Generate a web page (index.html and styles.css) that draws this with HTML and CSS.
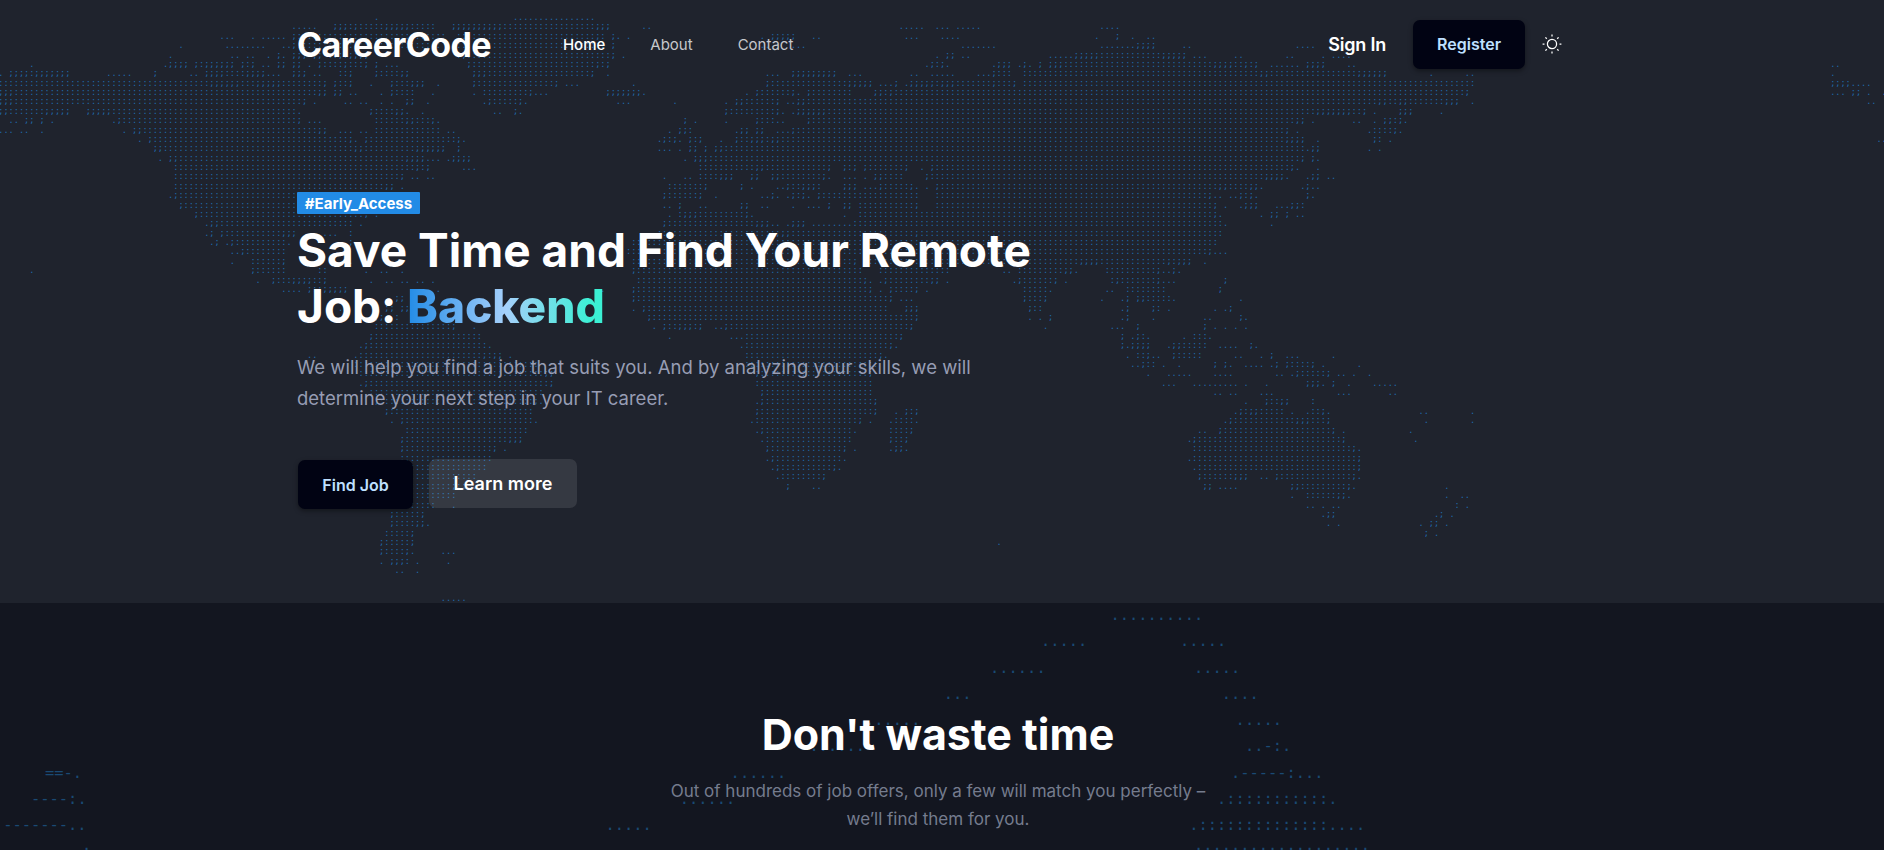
FILE: index.html
```html
<!DOCTYPE html>
<html lang="en">
<head>
<meta charset="utf-8">
<title>CareerCode</title>
<link rel="stylesheet" href="styles.css">
</head>
<body>
<section class="hero">
  <pre class="map map-world" id="world" aria-hidden="true"></pre>
  <header class="topbar">
    <a class="logo">CareerCode</a>
    <nav class="nav">
      <a class="nav-link active">Home</a>
      <a class="nav-link about">About</a>
      <a class="nav-link contact">Contact</a>
    </nav>
    <div class="actions">
      <a class="signin">Sign In</a>
      <a class="btn btn-dark">Register</a>
      <svg class="sun" viewBox="0 0 20 20" fill="none" stroke="currentColor" stroke-width="1.25">
        <circle cx="10" cy="10" r="4.6"/>
        <path d="M10 .6v1.9M10 17.5v1.9M.6 10h1.9M17.5 10h1.9M3.4 3.4l1.4 1.4M15.2 15.2l1.4 1.4M3.4 16.6l1.4-1.4M15.2 4.8l1.4-1.4"/>
      </svg>
    </div>
  </header>
  <div class="intro">
    <span class="badge">#Early_Access</span>
    <h1 class="headline"><span class="line">Save Time and Find Your Remote</span><span class="line">Job: <span class="accent">Backend</span></span></h1>
    <p class="lead"><span class="line">We will help you find a job that suits you. And by analyzing your skills, we will</span><span class="line">determine your next step in your IT career.</span></p>
    <div class="cta">
      <a class="btn btn-dark">Find Job</a>
      <a class="btn btn-light">Learn more</a>
    </div>
  </div>
</section>
<section class="waste">
  <pre class="map map-globe" id="globe" aria-hidden="true"></pre>
  <h2 class="title">Don't waste time</h2>
  <p class="sub"><span class="line">Out of hundreds of job offers, only a few will match you perfectly –</span><span class="line">we’ll find them for you.</span></p>
</section>
<script src="map.js"></script>
</body>
</html>
```
FILE: map.js
```js
// Each row lists runs as "from~to" + character, measured inside a strip.
// Strips (w, c, e, f) have their own origin column; ":" is the default land character.
const world = {
  pitch: 12.82,
  origin: { w: -0.15, c: 122.1, e: 243.3, f: 223.1 },
  rows: [
    "w 938. 1285~1475.",
    "w 734~784. 834~1080 834~860; 885; 960~1015; 1130~1515 1130~1240; 1485~1515; c 37~50. 678~730. 768~793. 818~870. 1178~1216.",
    "w 553~580. 630. 656~708. 734; 745~1100 1140~1500 1490; 1525; 1540. c 0. 332. 358~408; 460~472. 690~716. 780~820. 1165. 1217; 1255. 1294~1306.",
    "w 450. 565~657. 708~720. 734; 745~1090 1130~1500 1525; c 332~345. 410~435. 832~908. 1178~1255. 1268~1306; 1383~1396. e 110~150.",
    "w 424. 579~591. 617~630. 668. 694; 708. 732~745; 758; 780; 796; 820~835. 850~912; 860. 1143. 1156; 1168~1510 1525; 1553. c 768. 793~806; 832~845. 1050~1102. 1114~1165; 1178~1320 1332~1383; 1408~1434. 1511~1524. e 87~100. 175. 202~240.",
    "w 79. 412. 424~463; 488~580; 501: 604~630; 617: 656~668. 694~708; 732~745; 770. 796; 808~900 860; 912; 938; 963~988. 1168; 1180~1480 1490~1515; 1503: c 742. 755~780; 768: 793. 908. 920~946; 972. 985; 998. 1024; 1050~1076; 1088~1450 1460~1500; 1510~1568 1537; e 8; 46~112. 137~175; 240~252. 548. 1440~1453.",
    "w 3. 27~65; 79 92~165; 270~322. 387; 476~488. 514~553; 560~600 617~657; 668~694. 732~758; 783~796. 848~860 874; 938; 950~988 1000~1015; 1180~1205; 1218~1470 1478; 1515. c 345~370. 408~512; 550~575. 704~716. 755~806. 870~896. 908; 920~946 985~1568 e 8 21~33; 46~255 266~330; 446. 535~548. 1440.",
    "w 0~510 524~592; 604~630 642~694; 707~796 809; 834; 847~860 873; 925. 976; 988~1015 1028~1052; 1091. 1180; 1193~1375 1388; 1412~1437. c 11. 345; 358~540 550~600; 627~652. 665; 690. 704~755; 765 780~806; 819~900 908; 920~946 960; 985~1568 e 8~548 1440~1480; 1492~1530.",
    "w 3~27; 40~780 796~809; 834~847; 873~886. 950. 976; 988~1028 1079. 1182. 1207~1310 1322; 1335~1360. 1513~1568; c 11~24; 37. 294. 320; 332~396 409; 422. 447; 460~550 614~652; 640: 665~1568 e 8~525 537; 1440~1466. 1492~1505; 1530. 1568.",
    "w 3~27; 40~745 758; 783. 860~873. 898~912. 950. 976. 1015~1028; 1067. 1207. 1218; 1230~1285 1297; 1310. 1540~1568. c 0. 114. 243. 268~281; 294~358 371; 396~409. 422~434; 447~1568 e 8~306 318~330; 343~356 369~381; 394~470 484~510; 548. 1530~1543.",
    "w 3~15; 27~100 115~168; 220~270; 283~735 745. 925; 937~976 988~1002; 1015. 1052. 1233~1246. 1285; 1297. c 243; 256~358 371; 384. 409. 422~486; 499~1568 e 8~150 162~240; 253~266 279; 305. 368~394; 471.",
    "w 27~40. 66~79; 104; 130. 284. 297; 310~732 745; 770~796. 938~1000 1012~1028; 1040~1065 1079; 1092. c 140; 165. 243. 318; 332~358 371~384. 447; 460~1568 e 8~100 112~125; 150. 253~266. 305. 330~368; 356: 381.",
    "w 3~27. 53~66. 104. 310. 335~348; 360~783 796~809; 848~873. 899~912. 937~1092 1117~1130. c 101. 127~140; 152 268. 281~294; 318~332; 370~396. 409; 422~1568 e 8~74 87; 112. 292. 305~343 356; 368.",
    "w 348. 374; 387~860 873; 886. 912; 925~1130 1143; 1156. c 75. 88~114; 101: 127. 152~178; 165: 230. 268; 281~294 306~370; 345: 384~1568 e 8~74 87~125; 163. 305; 318 343. 1556~1568.",
    "w 387~400; 412~873 886~899; 912~1028 1040~1105; 1143; c 75~101. 127. 152~165; 190; 216~230; 243~1568 e 8~125 137. 150~163; 292. 318.",
    "w 399. 425~438; 450~1000 1012~1052; 1065~1092. 1117. 1130~1168; c 140. 165~190; 203~1568 e 8~112 125; 150; 163.",
    "w 437~1028 1040; 1052 1065; 1156~1182. c 178~305 318~332; 345~486 497; 537; 550 560; 588; 600~680 690; 730. 755; 768~1568 e 8~87 100; 112. 163.",
    "w 437~990 1002; 1028~1040. 1067~1079. c 88. 140~152. 178~216 228~255; 305~318; 358~370; 384~470 484; 497. 537~563. 588. 614~627; 640~680 742; 755~1568 e 8~21 33~74; 87. 137. 150~163; 190~203.",
    "w 437~950 963~976; 1002. c 101~178 190; 281; 305. 370~384. 396; 409~470 434~460; 537~563; 588~614. 627; 640~690 704; 716. 742. 768; 780~1460 1472~1490; 1500~1568 1550; e 8; 21. 125. 137; 150~163.",
    "w 425. 437; 450~735 c 88; 101~165 178; 216. 332~345. 358; 371. 396. 409; 422 434; 447. 472; 484~716 768~1434 1447; 1460~1472. 1498~1511. 1524~1550; 1537: 1562. e 8. 137; 150.",
    "w 450; 463~735 c 88~101. 127; 178~190. 281~294; 332~345. 409. 447~472. 498; 537~550; 575~704 716; 768~1447 1460; 1485. 1524. 1537~1562; e 8; 60~87. 100~112; 125",
    "w 488; 501~899 912; 938. c 101. 127 140~165; 178~280 294; 306. 537. 575~1447 1460; 1472. e 22. 48~60; 87; 112~125.",
    "w 514. 527~540; 553~873 899. c 88; 101~305 318~345; 358~371. 396. 409~434; 460~550. 563~1472 1485.  e 48.",
    "w 514. 527; 553; 565~700 708~732; 810~835. 873 c 75~1472 358~396; 716;",
    "w 527. 540; 565. 578; 590~708 720. 873; c 11~1460",
    "w 579~591. 604; 617~708 c 0~1434 1447; 1460~1485.",
    "w 579. 630~694 708; 873. 925. c 11~550 563; 600~960 972~1115 1127~1165; 1178~1330 1343~1396; 1358: 1434.",
    "w 79. 630; 642~708 796~809 912. 950~963. 1002. c 11; 24~575 625~793 934~946. 972~1076 1088~1102; 1114. 1190~1306 1319; 1332~1345. 1358; 1370.",
    "w 642. 681; 694~720 732~770; 783~796 809; 925. 963~976. 1002~1015. 1040~1052. 1079. c 24~575 588; 601. 627. 640; 652~745 755~768; 793. 960. 972; 985~1050 1063; 1088. 1204 1216; 1230~1306 1319; 1332~1358. 1485;",
    "w 706~745. 770; 783~796 809~860; 1091. 1502. c 11; 24~588 601; 627. 652; 665~704 716; 742. 985~1037 1050. 1190~1204. 1242~1332 1472;",
    "w 990~1002; c 11; 24~640 652; 678~704. 985; 998~1024 1037; 1178. 1230. 1242; 1268~1280; 1293~1345 1358. 1524.",
    "w 848. 963~976; 1000~1015; c 11. 37; 50~640 690~716; 998; 1011~1024 1230. 1242; f 11; 24 50. 165. 191. 204;",
    "w 886. 925; 938~950; 990 1105. c 50; 62~704 716; 998. 1024. 1050; 1230. 1242; f 11. 140~152. 230; 242.",
    "w 938~1117 1130; 1182. c 63. 88; 101~115 127~150; 165 178; 216~230. 242; 255~690 704; 1037. 1204~1230. 1268; f 140; 165. 191. 217. 242.",
    "w 925; 938~1195 c 101. 255~280. 294~665 678; 1230; 1255. 1268; 1280 1293. f 88. 114~140 152.",
    "w 899. 912; 925~1207 1220. c 281. 294~640 652; 665. 1230; 1242. 1255; 1268~1294; f 50. 62~75; 88~140 178~217. 255; 268.",
    "w 770~783. 886. 899~1195 1207; 1220 1233~1246; 1271. c 294~614 627; 640. 1242. 1268~1280 1293; f 11~24. 62; 75~127 217~230. 281. 306; 345~370. 460.",
    "w 886~1335 c 294~614 1255~1268. 1280; 1293 f 0~11 37. 75. 165; 191; 204. 242~281. 306. 319; 345; 358~396 409; 435. 525.",
    "w 899~1358 1363~1375; c 320; 332~588 601; 1293. f 50~101. 165~204. 320~332. 358. 370; 384~435 447; 473~486. 512. 550.",
    "w 899. 912; 925~1363 1375; c 320~601 f 37~63. 114~217. 242. 294. 396~422; 435. 460; 499. 563~614.",
    "w 925; 938~1350 c 332; 345~601 f 165~178. 204~217. 281~306. 473~499. 601~614.",
    "w 938; 950~1325 1338; 1350. c 320. 332; 345~601 614; f 242. 294; 306~320 332~345; 409",
    "w 963; 976~1322 c 320; 332~601 614; 665. 690; 703 716; f 217. 230; 242 255~268; 281~332 358. 396. 409~422 435; 447. 678~691. 807.",
    "w 976. 1002; 1015~1322 1335. c 306. 320~563 575; 601. 652. 665~704 716. f 191. 204; 217~358 370~396; 409~435 447; 691. 807.",
    "w 1015~1310 c 320. 332; 345~550 563. 652~690 704; f 127~140. 178; 191~448 460; 486. 653.",
    "w 1002; 1015~1258 1271~1297; c 332. 345~550 652; 665~678 690; f 101. 114; 127~473 486; 666.",
    "w 1002; 1015~1220 1233; 1258. c 345; 358~525 537; 563. 652. 665~678; 690. f 114~499 512; 525.",
    "w 1002~1220 c 345. 358; 370~525 537. f 101. 114~512 525;",
    "w 1028~1207 c 358. 370; 384~500 512; 525. f 114. 127~512 525;",
    "w 1028~1180 c 370. 384~473 486; f 127; 140~204 217~242; 281~294. 320; 332~499 512; 525.",
    "w 1028~1117 1130~1170; 1182. c 396; 460~473. f 140~152; 178~217. 358~370; 384~486 499; 512. 743.",
    "w 1028~1130 f 358. 396~460 473~486; 499. 743. 781~794.",
    "w 1028~1079 1130. f 396~409. 435. 460~473. 768 794.",
    "w 976; 988~1040 1052; f 435. 448~460; 717. 730; 756.",
    "w 976; 988~1028 1040~1052; 1067. f 448. 473. 678. 704~717; 743.",
    "w 963~1015 1028; f 691; 717.",
    "w 950; 963~1015 1028; c 920.",
    "w 950; 963~1002 1015; 1028. 1105~1130.",
    "w 950. 976~1002; 1015 1040. 1117.",
    "w 990~1002. 1040.",
    "",
    "",
    "w 1105~1156."
  ]
};

const globe = {
  pitch: 18.175,
  origin: { w: -0.35, c: 63.28 },
  rows: [
    "c 704~867.",
    "c 613~685. 885~958.",
    "c 540~631. 940~1013.",
    "c 485~521. 1031~1085.",
    "c 377~467. 1104~1176.",
    "c 285~376. 1140~1158. 1176- 1194 1212.",
    "w 6~24= 42- 60. c 195~285. 1176. 1194~1267- 1285 1303~1340.",
    "w 6~60- 78 97. c 122~213. 1176. 1194~1376 1394.",
    "w 6~115- 133~151. c 31~104. 1176. 1194~1431 1449~1503.",
    "w 6~151- 170 c 1194~1525"
  ]
};

function drawMap(map) {
  return map.rows.map(row => {
    const cells = [];
    let base = 0;
    for (const token of row.split(/\s+/).filter(Boolean)) {
      if (token in map.origin) { base = map.origin[token]; continue; }
      const [, from, to, ch] = token.match(/^(\d+)(?:~(\d+))?(\D)?$/);
      const a = Math.round(base + from / map.pitch);
      const b = Math.round(base + (to || from) / map.pitch);
      for (let i = a; i <= b; i++) cells[i] = ch || ":";
    }
    return Array.from(cells, c => c || " ").join("");
  }).join("\n");
}

document.getElementById("world").textContent = drawMap(world);
document.getElementById("globe").textContent = drawMap(globe);
```
FILE: styles.css
```css
* { box-sizing: border-box; }
body {
  margin: 0;
  height: 850px;
  overflow: hidden;
  background: #131620;
  color: #fff;
  font-family: Inter, "Liberation Sans", sans-serif;
}
.line { display: block; white-space: nowrap; }
.hero {
  position: relative;
  height: 603px;
  overflow: hidden;
  background: #1f232d;
}
.map {
  position: absolute;
  margin: 0;
  font-family: "DejaVu Sans Mono", "Liberation Mono", monospace;
  white-space: pre;
  pointer-events: none;
}
.map-world {
  left: -1.7px;
  top: 13px;
  font-size: 8.556px;
  line-height: 9.37px;
  color: #1f6aab;
}
.map-globe {
  left: -1.4px;
  top: -1px;
  font-size: 15.4px;
  line-height: 26.25px;
  color: #1a4a74;
}
.topbar {
  position: relative;
  display: flex;
  align-items: center;
  height: 88px;
  padding: 0 322px 0 297px;
}
.logo { font-size: 34px; font-weight: 700; letter-spacing: -0.6px; }
.nav { display: flex; gap: 45px; margin-left: 72px; font-size: 15px; }
.nav-link { color: #c6c8cc; }
.nav-link.active { color: #fff; font-weight: 500; }
.actions { display: flex; align-items: center; margin-left: auto; }
.signin { font-size: 18px; font-weight: 600; margin-right: 27px; letter-spacing: -.2px; }
.btn {
  display: flex;
  align-items: center;
  justify-content: center;
  height: 49px;
  border-radius: 7px;
  font-weight: 600;
}
.btn-dark {
  width: 115px;
  background: #010313;
  color: #bfe0ff;
  font-size: 16px;
  box-shadow: 0 2px 5px rgba(0, 0, 0, .4);
}
.actions .btn-dark { width: 112px; }
.sun { width: 20px; height: 20px; margin-left: 17px; }
.intro { position: relative; padding: 104px 0 0 297px; }
.badge {
  display: flex;
  align-items: center;
  justify-content: center;
  width: 123px;
  height: 22px;
  border-radius: 1px;
  background: #228be6;
  font-size: 15px;
  font-weight: 700;
}
.headline { margin: 8px 0 0; font-size: 46px; font-weight: 700; line-height: 56px; }
.accent {
  font-weight: 800;
  background: linear-gradient(90deg, #228be6 0%, #a5d0fb 50%, #3bf0d4 93%);
  -webkit-background-clip: text;
  background-clip: text;
  color: transparent;
}
.lead { margin: 18px 0 0; font-size: 18.5px; line-height: 31px; color: #979db4; }
.cta { display: flex; gap: 16px; margin-top: 45px; padding-left: 1px; }
.cta .btn-dark { margin-top: 1px; }
.btn-light { width: 148px; background: rgba(255, 255, 255, .1); font-size: 18px; }
.waste { position: relative; height: 247px; overflow: hidden; text-align: center; padding-top: 105px; }
.title { position: relative; margin: 0; font-size: 43px; line-height: 52px; font-weight: 700; }
.sub { position: relative; margin: 17px 0 0; font-size: 17px; line-height: 28px; color: #757c8e; }
.title, .sub { left: -4px; }
```
